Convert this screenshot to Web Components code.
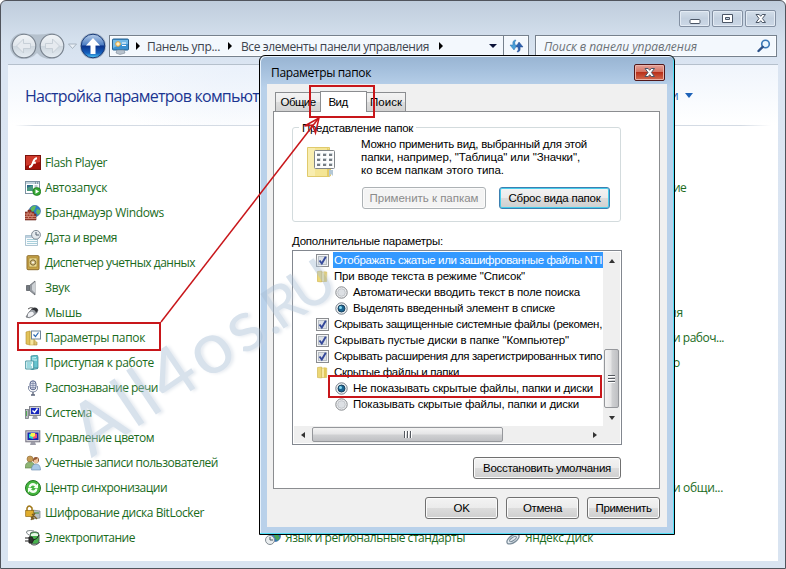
<!DOCTYPE html>
<html lang="ru">
<head>
<meta charset="utf-8">
<title>Параметры папок</title>
<style>
html,body{margin:0;width:786px;height:569px;overflow:hidden;background:#fff}
</style>
</head>
<body>
<desktop-scene></desktop-scene>
<script>
const ICONS = {
flash:`<rect x=".5" y=".5" width="15" height="14" fill="#a3120b" stroke="#7c120c"/><path d="M1 1h14v6q-8 1-14 4z" fill="#cf3a2c"/><path d="M12 3.2c-3 0-3.4 3-4.3 5.200C7 10.600 6 12 4 12M7 7.700h3.800" fill="none" stroke="#fff" stroke-width="1.900"/>`,
autoplay:`<rect x=".5" y="1.500" width="14" height="12" fill="#fff" stroke="#7d93a3"/><path d="M1 2h13v2H1z" fill="#c3d3dd"/><path d="M10 3h1m1 0h1" stroke="#4b6373"/><rect x="2" y="5" width="6" height="6" fill="#2c6a86"/><path d="M2 8l6-3v6H2z" fill="#49987f"/><path d="M9.500 6h3M9.500 8h2" stroke="#7794a6"/><circle cx="11.800" cy="11.500" r="4" fill="#36a635" stroke="#167415" stroke-width=".7"/><path d="M10.500 9.300v4.400l3.600-2.200z" fill="#fff"/>`,
firewall:`<circle cx="9.800" cy="6" r="5.700" fill="#2e7fc6" stroke="#285b8e" stroke-width=".5"/><path d="M6 3c1-2 4-2.500 5-2l-1 3-2 3-3-1zM12 4l3 1v3l-2 2-2-3z" fill="#61bb5b"/><path d="M0 7h3V5h3v2h3v2h2v6H0z" fill="#9e3b2a" stroke="#672319" stroke-width=".6"/><path d="M0 9h9M0 11.500h11M0 13.500h11M3 7v2M6 7v2M2 9v2.500M5 9v2.500M8 9v2.500M3.500 11.500v2M7 11.500v2" stroke="#dda08c" stroke-width=".7"/>`,
date:`<path d="M.5 5.500h12v10H.5z" fill="#f8fbfd" stroke="#8dacbf" stroke-width=".7"/><path d="M1 6h11v2H1z" fill="#bdd0df"/><path d="M2.500 9.500h9M2.500 11.500h9M2.500 13.500h9" stroke="#5ba4b9" stroke-dasharray="1 1"/><circle cx="11" cy="4.800" r="4.400" fill="#e4e9ed" stroke="#808a95"/><path d="M11 2v3h3" fill="none" stroke="#53616e"/>`,
vault:`<rect x="2" y=".7" width="12" height="14" rx="1" fill="#c9a548" stroke="#8d6c2b"/><rect x="4" y="3" width="8" height="9" fill="#f0df95" stroke="#a18436" stroke-width=".7"/><circle cx="8" cy="7.500" r="2.700" fill="#d3bf83" stroke="#7b6434"/><circle cx="8" cy="7.500" r=".9" fill="#fff"/>`,
sound:`<path d="M1.500 5.500h3v5h-3z" fill="#747980" stroke="#4d5257" stroke-width=".7"/><path d="M4.500 5.500L10 1v14l-5.500-4.500z" fill="#969ba1" stroke="#5d6267" stroke-width=".7"/><path d="M7 5l3-3v11l-3-3z" fill="#ced2d6"/>`,
mouse:`<path d="M1 12Q3 7 8 3q4-1 5 2 0 3-5 6-4 3-7 1z" fill="#9a9fa5" stroke="#65696e" stroke-width=".7"/><path d="M6 5q4-1 5 3l2-3q-1-3-5-2z" fill="#323438"/><path d="M3 9q2-3 5-2l1 2q-2 3-6 3z" fill="#f1f2f5"/><path d="M8 3Q5 2 3 4" fill="none" stroke="#555"/>`,
folderopt:`<path d="M1 2l4-1v14l-4-1z" fill="#e2c25a" stroke="#b48f2b" stroke-width=".6"/><path d="M5 2h5l-1 13H5z" fill="#f7e7a0" stroke="#c7a748" stroke-width=".6"/><rect x="6.500" y="1" width="9" height="8" fill="#fcfdfe" stroke="#71859a"/><path d="M8.500 4.500l2 2 3-4" fill="none" stroke="#2867b1" stroke-width="1.200"/><path d="M9 9v6h3v-3" fill="#dec46f" stroke="#ac8b3a" stroke-width=".6"/>`,
start:`<path d="M6 1l6-1 1 2v11H6z" fill="#66c4cf" stroke="#31838e" stroke-width=".7"/><path d="M7 3l4-.5M7 5h5" stroke="#d2f4f6"/><path d="M.7 6h8v8h-8z" fill="#eafafa" stroke="#4897a2"/><path d="M2 8h5M2 10h4M2 12h5" stroke="#4eb7c4"/><path d="M5 14l8-1v1l-6 1z" fill="#3c919c"/>`,
mic:`<rect x="5" y=".8" width="6" height="9" rx="3" fill="#dce0ee" stroke="#59658d"/><path d="M5 3.500h6M5 5.500h6M5 7.500h6M8 1v9" stroke="#6d789a" stroke-width=".6"/><path d="M3.500 6v3q1 3 4.500 3t4.500-3V6" fill="none" stroke="#8993aa"/><path d="M8 12v3M6 15h4" stroke="#5b6479" stroke-width="1.300"/>`,
system:`<rect x=".5" y="4.500" width="3" height="9" fill="#b7bac0" stroke="#646b72" stroke-width=".7"/><path d="M1.500 6v5" stroke="#53aa54"/><rect x="4.500" y="1.500" width="11" height="9" fill="#cfd0d6" stroke="#83858e"/><rect x="6" y="3" width="8" height="6" fill="#1626be"/><path d="M7.500 5.500l2 2 3-4" fill="none" stroke="#fff" stroke-width="1.400"/><path d="M8 11h4l1 3H7z" fill="#a4a8b1"/>`,
color:`<rect x=".8" y=".8" width="14" height="11" fill="#cfcdd5" stroke="#777582"/><rect x="2.500" y="2.500" width="11" height="7.500" fill="#1625ae"/><path d="M4 4l4-1v6l-4-1z" fill="#23dbcc"/><path d="M8 3l4 1v4L8 9z" fill="#ee4d7a"/><path d="M6 3h4v3L8 7 5 6z" fill="#f8f54d"/><path d="M6 12h4l1 3H5z" fill="#9c9ca8"/>`,
users:`<circle cx="5" cy="4" r="3" fill="#c79a55" stroke="#8c6a31" stroke-width=".6"/><path d="M0 13q0-6 5-6t5 6z" fill="#8eb575" stroke="#5d7c45" stroke-width=".6"/><circle cx="11" cy="5" r="3" fill="#925632"/><path d="M9 5q2 0 4-2v4l-2 2-2-1z" fill="#efc49d"/><path d="M6.500 15q0-6 4.500-6t4.500 6z" fill="#a9c9e8" stroke="#6588ac" stroke-width=".6"/>`,
sync:`<circle cx="8" cy="8" r="7.500" fill="#45b53e" stroke="#237922"/><path d="M3.500 7.500Q4 3 8 3q2.300 0 3.500 1.700L13 3.500V8H8.500L10 6.500Q7 4 5.500 7.500zM12.500 8.500Q12 13 8 13q-2.300 0-3.500-1.700L3 12.500V8h4.500L6 9.500Q9 12 10.500 8.500z" fill="#f4fff2"/>`,
bitlocker:`<path d="M7 5l8 1v7l-8 1z" fill="#b9bec4" stroke="#767c83" stroke-width=".7"/><path d="M9 8h5" stroke="#398e39"/><path d="M2 6V3q2-4 5 0v3" fill="none" stroke="#a07716" stroke-width="1.500"/><rect x=".7" y="5.500" width="8" height="6" fill="#e0ad2e" stroke="#8f6815" stroke-width=".7"/><path d="M7 9l5 5M6 12l2 2 1-1M10 8l-4 7" stroke="#785b22" stroke-width="1.300"/>`,
power:`<rect x="5" y="2" width="9" height="12" rx="3" fill="#47b24d" stroke="#54625d"/><path d="M6 4q4-2 7 0v2H6z" fill="#e7f8e7"/><path d="M4 5Q0 3 2 1q3-1 7 0" fill="none" stroke="#81898b"/><path d="M0 8h4M0 11h4" stroke="#222" stroke-width="1.200"/><path d="M4 7h3q3 3 0 6H4z" fill="#303331" stroke="#222"/><path d="M8 10q4 0 6-5" fill="none" stroke="#222"/><path d="M6 14q4 3 9-2" stroke="#5b6062" fill="none"/>`,
region:`<circle cx="10" cy="6" r="5.500" fill="#2f74c6" stroke="#245797" stroke-width=".6"/><path d="M8 2l4 1 3 5-3 3-3-5z" fill="#4ba557"/><circle cx="5" cy="10" r="4.500" fill="#e9edef" stroke="#818b93"/><path d="M5 7v3h3" stroke="#4c5963" fill="none"/>`,
disk:`<ellipse cx="8" cy="9" rx="7" ry="3.500" transform="rotate(-35 8 9)" fill="#e4ebf1" stroke="#7c8d9a" stroke-width="1.300"/><ellipse cx="8" cy="9" rx="4" ry="1.500" transform="rotate(-35 8 9)" fill="none" stroke="#7c8d9a"/>`
};

const define = (name, html, setup) => customElements.define(name, class extends HTMLElement {
  constructor(){ super(); this.attachShadow({mode:'open'}); }
  connectedCallback(){
    if (this.shadowRoot.childNodes.length) return;
    this.shadowRoot.innerHTML = typeof html === 'function' ? html(this) : html;
    if (setup) setup(this);
  }
});

/* Single-line label whose tracking is adjusted to a given width. */
const pen = document.createElement('canvas').getContext('2d');
define('fit-text', `<style>:host{display:inline-block;white-space:pre;flex:none}</style><slot></slot>`, el => {
  const cs = getComputedStyle(el), t = el.textContent, w = +el.getAttribute('w');
  pen.font = `${cs.fontStyle} ${cs.fontWeight} ${cs.fontSize} ${cs.fontFamily}`;
  el.style.letterSpacing = ((w - pen.measureText(t).width) / t.length).toFixed(3) + 'px';
  el.style.width = w + 'px';
});

define('cp-icon', el => `<style>:host{display:block;width:16px;height:16px;flex:none}svg{display:block}</style><svg width="16" height="16" viewBox="0 0 16 16">${ICONS[el.getAttribute('name')]}</svg>`);

define('cp-item', el => `<style>:host{display:flex;align-items:center;gap:4px;height:25px;font:12px "Open Sans","Noto Sans",sans-serif;color:#1a6b1c}</style>
<cp-icon name="${el.getAttribute('icon')}"></cp-icon><fit-text w="${el.getAttribute('w')}">${el.getAttribute('label')}</fit-text>`);

/* Tail end of a label whose start lies beneath the dialog. */
define('cp-tail', `<style>:host{display:flex;align-items:center;justify-content:flex-end;height:25px;font:12px "Open Sans","Noto Sans",sans-serif;color:#1a6b1c;box-sizing:border-box}</style><slot></slot>`);

define('caption-button', el => `<style>:host{display:block;width:29px;height:15px;border:1px solid #8390a2;border-radius:2px;background:linear-gradient(#d4dfea,#c3d0df 50%,#ccd8e6);box-shadow:inset 0 0 0 1px #e3ebf4}
:host([red]){border-color:#52181a;background:linear-gradient(#e5a299,#d2705f 48%,#b9301a 50%,#d26b50);box-shadow:inset 0 0 0 1px #eab3a9}svg{display:block}</style>
<svg width="29" height="15" fill="#fff" stroke="#4b5666">${{
 min:'<rect x="10" y="8.500" width="10" height="4" rx="1"/>',
 max:'<path d="M9.500 3.500h10v8h-10zM12.500 6.500v2h4v-2z" fill-rule="evenodd"/>',
 close:'<path d="M10 3.500h3.200l1.500 1.800 1.500-1.800h3.300l-3.100 4 3.100 4h-3.300l-1.500-1.800-1.500 1.800H10l3-4z"/>'}[el.getAttribute('kind')]}</svg>`);

define('nav-bar', `<style>
:host{display:flex;align-items:center;height:28px;padding-left:7px;font:12px "Open Sans","Noto Sans",sans-serif;color:#3c434d}
.orbs{flex:none;display:block}
.addr,.search{display:flex;align-items:center;box-sizing:border-box;height:22px;border:1px solid #76818d;background:#f3f8fd;box-shadow:inset 0 0 0 1px #fbfdff}
.addr{width:420px;margin-left:3px;padding-left:2px}
.tri{width:0;height:0;border:4px solid transparent;border-left:4.500px solid #000;border-right:0;flex:none}
.down{width:0;height:0;border:4px solid transparent;border-top:4.500px solid #0b1238;border-bottom:0;flex:none}
.ref{border-left:1px solid #76818d;height:20px;width:24px;display:flex;align-items:center;justify-content:center}
.search{width:242px;margin-left:6px;padding:0 5px 0 8px;justify-content:space-between;font-style:italic;color:#6c7278}
</style>
<svg class="orbs" width="97" height="28"><defs>
<linearGradient id="o" x2="0" y2="1"><stop stop-color="#f2f5f8"/><stop offset=".5" stop-color="#dfe5eb"/><stop offset=".52" stop-color="#ced7df"/><stop offset="1" stop-color="#e6edf3"/></linearGradient>
<linearGradient id="b" x2="0" y2="1"><stop stop-color="#b7cdea"/><stop offset=".45" stop-color="#4e7fc4"/><stop offset=".5" stop-color="#0b338c"/><stop offset=".8" stop-color="#1560bd"/><stop offset="1" stop-color="#4ed0fa"/></linearGradient></defs>
<path d="M14 1q14 3 28 0a13 13 0 0 1 0 26q-9 0-14-6-5 6-14 6a13 13 0 0 1 0-26" fill="#abb7c3" opacity=".75"/>
<g fill="url(#o)" stroke="#77818d" stroke-width="1.100"><circle cx="15" cy="14" r="11.800"/><circle cx="43" cy="14" r="11.800"/></g>
<g fill="#e6eaef" stroke="#c3ccd4" stroke-width=".9"><path d="M7.500 14l7-7v4.500h7v5h-7V21z"/><path d="M50.500 14l-7-7v4.500h-7v5h7V21z"/></g>
<path d="M59.500 12h8l-4 4.500z" fill="#e9f0f7" stroke="#a1aebb" stroke-width=".9"/>
<circle cx="84" cy="14" r="13" fill="#a7b5c6"/><circle cx="84" cy="14" r="11.800" fill="url(#b)" stroke="#183a78"/>
<path d="M84 6l7 7.500h-4.500V22h-5v-8.500h-4.500z" fill="#fff"/></svg>
<div class="addr">
<svg width="17" height="17" viewBox="0 0 17 17" style="flex:none"><rect x=".5" y="1" width="16" height="11" rx="1" fill="#3a91d1" stroke="#27618f"/><path d="M1 2h15v4q-8 0-15 4z" fill="#74bbe8"/><circle cx="6" cy="6" r="2.300" fill="#fff1c4" stroke="#e9a336"/><path d="M10 5h4M10 7.500h4" stroke="#fff"/><path d="M5 12h7l1 3-5 1.500-4-1.500z" fill="#b7c2cd" stroke="#7d8a97" stroke-width=".6"/></svg>
<i class="tri" style="margin:0 7px 0 7px"></i><fit-text w="73">Панель упр...</fit-text><i class="tri" style="margin:0 9px 0 8px"></i><fit-text w="188">Все элементы панели управления</fit-text><i class="tri" style="margin-left:10px"></i>
<i class="down" style="margin:0 6px 0 auto"></i>
<span class="ref"><svg width="15" height="14"><path d="M7 1Q3 1 4 6H1l4 5 3-5H6Q5 3 7 1z" fill="#4aa0d8" stroke="#2b6fae" stroke-width=".5"/><path d="M8 13q4 0 3-5h3l-4-5-3 5h2q1 3-1 5z" fill="#2d62b0" stroke="#234b8d" stroke-width=".5"/></svg></span>
</div>
<div class="search"><fit-text w="153">Поиск в панели управления</fit-text>
<svg width="14" height="14"><circle cx="8.500" cy="5" r="3.800" fill="#eaf5fd" stroke="#3b78b6" stroke-width="1.600"/><path d="M5.700 7.800L1.500 12" stroke="#2d5288" stroke-width="2.400" stroke-linecap="round"/></svg></div>`);

const items = [['flash','Flash Player',62],['autoplay','Автозапуск',62],['firewall','Брандмауэр Windows',119],['date','Дата и время',72],['vault','Диспетчер учетных данных',150],['sound','Звук',25],['mouse','Мышь',37],['folderopt','Параметры папок',100],['start','Приступая к работе',109],['mic','Распознавание речи',113],['system','Система',47],['color','Управление цветом',109],['users','Учетные записи пользователей',173],['sync','Центр синхронизации',122],['bitlocker','Шифрование диска BitLocker',159],['power','Электропитание',90]];
const tails = [[2,'ие',13,686],[7,'ия',14,683],[8,'и рабоч...',51,724],[9,'о',7,680],[14,'и общи...',50,723]];

define('explorer-window', `<style>
:host{display:flex;flex-direction:column;box-sizing:border-box;width:786px;height:569px;border:1px solid #50545c;border-radius:6px 6px 0 0;padding:0 7px 7px;background:linear-gradient(#bfcddc,#d5e1ee 40px,#dbe5f2 64px,#d9e4f1)}
.caps{display:flex;justify-content:flex-end;gap:2px;height:22px;padding:9px 2px 0 0}
nav-bar{margin:0 -6px}
.client{flex:1;background:#fff;display:flex;flex-direction:column;margin-top:4px;border-top:1px solid #b5c0cc;overflow:hidden}
.head{height:60px;flex:none;display:flex;align-items:center;justify-content:space-between;padding:1px 85px 0 17px;box-sizing:border-box;background:radial-gradient(ellipse 130px 90px at 230px 0,#e6eefa88,#fff0),linear-gradient(#f0f5fc,#fff);font:16px "Open Sans","Noto Sans",sans-serif;color:#1b3591}
.view{display:flex;align-items:center;gap:6px;font-size:12px;color:#1d62b8}
.view i{border:4.500px solid transparent;border-top:5px solid #1d62b8;border-bottom:0}
hr{margin:0 7px;border:0;height:1px;flex:none;background:linear-gradient(90deg,#fff,#d4dbe4 20px,#d4dbe4 96%,#fff)}
.grid{display:grid;grid-template-columns:240px 240px 240px;grid-template-rows:repeat(16,25px);padding:24px 0 0 17px}
.grid>*{min-width:0}
</style>
<div class="caps"><caption-button kind="min"></caption-button><caption-button kind="max"></caption-button><caption-button kind="close"></caption-button></div>
<nav-bar></nav-bar>
<div class="client"><div class="head"><fit-text w="234">Настройка параметров компьют</fit-text><span class="view"><fit-text w="8">и</fit-text><i></i></span></div><hr>
<div class="grid">${items.map(([i,l,w],n)=>`<cp-item style="grid-area:${n+1}/1" icon="${i}" label="${l}" w="${w}"></cp-item>`).join('')}
<cp-item style="grid-area:16/2" icon="region" label="Язык и региональные стандарты" w="180"></cp-item>
<cp-item style="grid-area:16/3" icon="disk" label="Яндекс.Диск" w="68"></cp-item>
${tails.map(([r,t,w,e])=>`<cp-tail style="grid-area:${r}/3;width:${e-505}px"><fit-text w="${w}">${t}</fit-text></cp-tail>`).join('')}
</div></div>`);

define('push-button', el => `<style>:host{display:flex;align-items:center;justify-content:center;box-sizing:border-box;height:22px;border:1px solid #707070;border-radius:3px;background:linear-gradient(#f3f3f3,#ebebeb 50%,#dcdcdc 51%,#cfcfcf);box-shadow:inset 0 0 0 1px #fbfbfb;color:#000}
:host([off]){background:#f4f4f4;border-color:#adb2b5;color:#8b8b8b}
:host([default]){border-color:#3c7fb1;box-shadow:inset 0 0 0 1px #48cdec}</style><fit-text w="${el.getAttribute('tw')}">${el.getAttribute('label')}</fit-text>`);

define('tab-head', `<style>:host{display:flex;align-items:center;justify-content:center;box-sizing:border-box;height:19px;border:1px solid #8b8d90;border-bottom:0;background:linear-gradient(#f3f3f3,#ebebeb 50%,#dddddd 51%,#d2d2d2);margin-left:-1px}
:host([on]){height:21px;background:#fff;margin-bottom:-1px;padding-right:11px;position:relative}</style><slot></slot>`);

define('tree-row', el => {
  const k = el.getAttribute('kind');
  const g = {
   check:'<rect x=".5" y=".5" width="12" height="12" fill="#f5f6f7" stroke="#8a8c90"/><rect x="2.500" y="2.500" width="8" height="8" fill="#dde1e6" stroke="#b8bec5"/><path d="M3.500 6.500l2.300 3L9.800 2.800" fill="none" stroke="#34489a" stroke-width="1.900"/>',
   folder:'<path d="M1.500 1.500l4-.5v11l-4-.5z" fill="#ecd776" stroke="#cdb044" stroke-width=".6"/><path d="M5.500 2h5.200v9.500H5.500z" fill="#f6e8a2" stroke="#cfb350" stroke-width=".6"/><path d="M8 1.500l2.500.5v9L8 12z" fill="#e3c95c"/>',
   radio:'<circle cx="6.500" cy="6.500" r="5.700" fill="#f0f1f2" stroke="#86898d"/><circle cx="6.500" cy="6.500" r="3.800" fill="#dde0e4" stroke="#c1c5ca"/>',
   on:'<circle cx="6.500" cy="6.500" r="5.700" fill="#f0f3f5" stroke="#747d87"/><circle cx="6.500" cy="6.500" r="3.500" fill="#1c6591" stroke="#173f5c"/><circle cx="5.500" cy="5.500" r="1.500" fill="#86d8f2"/>'}[k];
  return `<style>:host{display:flex;align-items:center;gap:4px;height:16px;flex:none;padding-left:${k=='radio'||k=='on'?42:23}px}svg{flex:none;margin-left:-1px}
  span{display:flex;align-items:center;height:16px;padding-left:1px}:host([sel]) span{flex:1;background:#3399ff;color:#fff}</style><svg width="13" height="13">${g}</svg><span><fit-text w="${el.getAttribute('w')}">${el.getAttribute('label')}</fit-text></span>`;
});

define('scroll-bar', el => {
  const v = el.hasAttribute('vertical');
  return `<style>:host{display:flex;box-sizing:border-box;background:#efefef;flex-direction:${v?'column':'row'};align-items:center}
  b{width:17px;height:17px;display:flex;align-items:center;justify-content:center;flex:none}b i{border:3.500px solid transparent}
  .t{box-sizing:border-box;border:1px solid #95979b;border-radius:2px;background:linear-gradient(${v?'90deg':'180deg'},#f4f4f4,#e4e4e5 48%,#d0d1d3 52%,#bfc0c3);display:flex;align-items:center;justify-content:center;${v?'width:15px;height:59px;margin-top:auto;margin-bottom:1px':'height:15px;width:191px;margin-left:1px;margin-right:auto'}}
  .g{${v?'width:7px;height:8px;background:repeating-linear-gradient(#55595f 0 1px,#fff 1px 2px,transparent 2px 3px)':'width:8px;height:7px;background:repeating-linear-gradient(90deg,#55595f 0 1px,#fff 1px 2px,transparent 2px 3px)'}}</style>
  <b><i style="border-${v?'bottom':'right'}:4px solid #333;border-${v?'top':'left'}:0"></i></b><span class="t"><span class="g"></span></span><b><i style="border-${v?'top':'left'}:4px solid #333;border-${v?'bottom':'right'}:0"></i></b>`;
});

const rows = [['check','Отображать сжатые или зашифрованные файлы NTI',268,'sel'],['folder','При вводе текста в режиме "Список"',191],['radio','Автоматически вводить текст в поле поиска',227],['on','Выделять введенный элемент в списке',202],['check','Скрывать защищенные системные файлы (рекомен,',268],['check','Скрывать пустые диски в папке "Компьютер"',235],['check','Скрывать расширения для зарегистрированных типо',268],['folder','Скрытые файлы и папки',125],['on','Не показывать скрытые файлы, папки и диски',240],['radio','Показывать скрытые файлы, папки и диски',226]];

define('folder-dialog', `<style>
:host{display:flex;flex-direction:column;box-sizing:border-box;width:416px;height:480px;border:1px solid #000;border-radius:6px 6px 0 0;background:linear-gradient(#98b4d2,#a5c0dd 14px,#b9d1ea 32px,#b9d1ea);box-shadow:inset -1px -1px #4fe0f8,inset 1px 1px #e6f1fb;padding:0 7px 7px;font:11.500px "Liberation Sans",Arial,sans-serif;color:#000}
.title{height:28px;display:flex;align-items:center;justify-content:space-between;padding:5px 2px 0 4px;box-sizing:border-box;flex:none;font:12px "Open Sans","Noto Sans",sans-serif}
.body{flex:1;background:#f0f0f0;display:flex;flex-direction:column;padding:7px 7px 8px 6px;min-height:0}
.tabs{display:flex;align-items:flex-end;height:20px;padding-left:3px;flex:none}
.page{flex:1;border:1px solid #8b8d90;background:#fff;padding:0 38px 0 18px;display:flex;flex-direction:column;min-height:0}
.group{border:1px solid #d3dbdd;border-radius:3px;margin-top:15px;height:93px;display:flex;flex-direction:column;flex:none}
.leg{align-self:flex-start;background:#fff;margin:-7px 0 0 6px;padding:0 3px;height:14px;line-height:14px}
.in{display:flex;padding:3px 11px 0 14px;gap:22px}
.txt{display:flex;flex-direction:column;line-height:13px;padding-left:1px}
.acts{display:flex;gap:13px;margin-top:10px}
.list{flex:none;box-sizing:border-box;width:330px;height:195px;border:1px solid #82878f;display:grid;grid-template-columns:1fr 17px;grid-template-rows:1fr 17px;padding:1px 1px 1px 1px;margin-top:2px}
.rows{overflow:hidden;display:flex;flex-direction:column}
.foot{display:flex;justify-content:flex-end;gap:8px;margin-top:8px;flex:none}
</style>
<div class="title"><fit-text w="100">Параметры папок</fit-text><caption-button red kind="close"></caption-button></div>
<div class="body">
<div class="tabs"><tab-head style="width:46px"><fit-text w="35">Общие</fit-text></tab-head><tab-head on style="width:47px"><fit-text w="19">Вид</fit-text></tab-head><tab-head style="width:40px"><fit-text w="32">Поиск</fit-text></tab-head></div>
<div class="page">
<div class="group"><div class="leg"><fit-text w="111">Представление папок</fit-text></div>
<div class="in"><svg width="31" height="34" style="margin-top:8px;flex:none"><path d="M.5 1.500h22v29H.5z" fill="#f4e595" stroke="#e0ca6c"/><path d="M1 2h7v28H1z" fill="#f8edb0"/><path d="M20 2l4 3v25l-4 1z" fill="#e4cb66"/><path d="M22 24h4v6l-2-2-2 3z" fill="#b3c7d5"/><rect x="7.500" y="4.500" width="20" height="18" rx="1" fill="#fdfdfd" stroke="#808589"/>${[8,13,18].map(y=>[10,16,22].map(x=>`<rect x="${x}" y="${y-1}" width="3.500" height="3" fill="#c8d1d7"/><path d="M${x} ${y+1}h3" stroke="#262b31"/>`).join('')).join('')}</svg>
<div><div class="txt"><fit-text w="226">Можно применить вид, выбранный для этой</fit-text><fit-text w="219">папки, например, "Таблица" или "Значки",</fit-text><fit-text w="143">ко всем папкам этого типа.</fit-text></div>
<div class="acts"><push-button off label="Применить к папкам" tw="109" style="width:124px;margin-left:2px"></push-button><push-button default label="Сброс вида папок" tw="92" style="width:111px"></push-button></div></div></div></div>
<fit-text w="151" style="margin-top:12px;line-height:14px">Дополнительные параметры:</fit-text>
<div class="list"><div class="rows">${rows.map(([k,l,w,s])=>`<tree-row kind="${k}" ${s||''} label='${l}' w="${w}"></tree-row>`).join('')}</div>
<scroll-bar vertical></scroll-bar><scroll-bar></scroll-bar><span style="background:#efefef"></span></div>
<push-button label="Восстановить умолчания" tw="128" style="width:148px;align-self:flex-end;margin-top:12px;flex:none"></push-button>
</div>
<div class="foot"><push-button label="OK" tw="16" style="width:73px"></push-button><push-button label="Отмена" tw="39" style="width:73px"></push-button><push-button label="Применить" tw="56" style="width:73px"></push-button></div>
</div>`);

define('water-mark', `<style>:host{display:flex;align-items:baseline;white-space:pre;font:72px Lato,"Open Sans",sans-serif;line-height:80px;color:#a9bfd6;opacity:.45;transform-origin:0 64px;text-shadow:2px 2px 3px #ccd6e2}.s{font-size:58px}</style><fit-text w="218">All4os</fit-text><fit-text class="s" w="78">.RU</fit-text>`);

define('red-marks', `<style>:host{display:block}svg{display:block}</style><svg width="786" height="569" fill="none" stroke="#c8161a" stroke-width="2">
<rect x="18" y="323" width="142" height="27"/><rect x="310" y="86" width="64" height="31"/><rect x="329" y="376" width="272" height="21"/>
<path d="M161 322L318 119" stroke-width="1.500"/><path d="M304.500 126L319 118l-3.500 15-3-8z" stroke-width="1.500"/></svg>`);

define('desktop-scene', `<style>:host{display:block;position:relative;width:786px;height:569px;overflow:hidden}
folder-dialog{position:absolute;left:259px;top:55px}
water-mark{position:absolute;left:89px;top:391px;transform:rotate(-34deg)}
red-marks{position:absolute;left:0;top:0}</style>
<explorer-window></explorer-window><folder-dialog></folder-dialog><water-mark></water-mark><red-marks></red-marks>`);
</script>
</body>
</html>
